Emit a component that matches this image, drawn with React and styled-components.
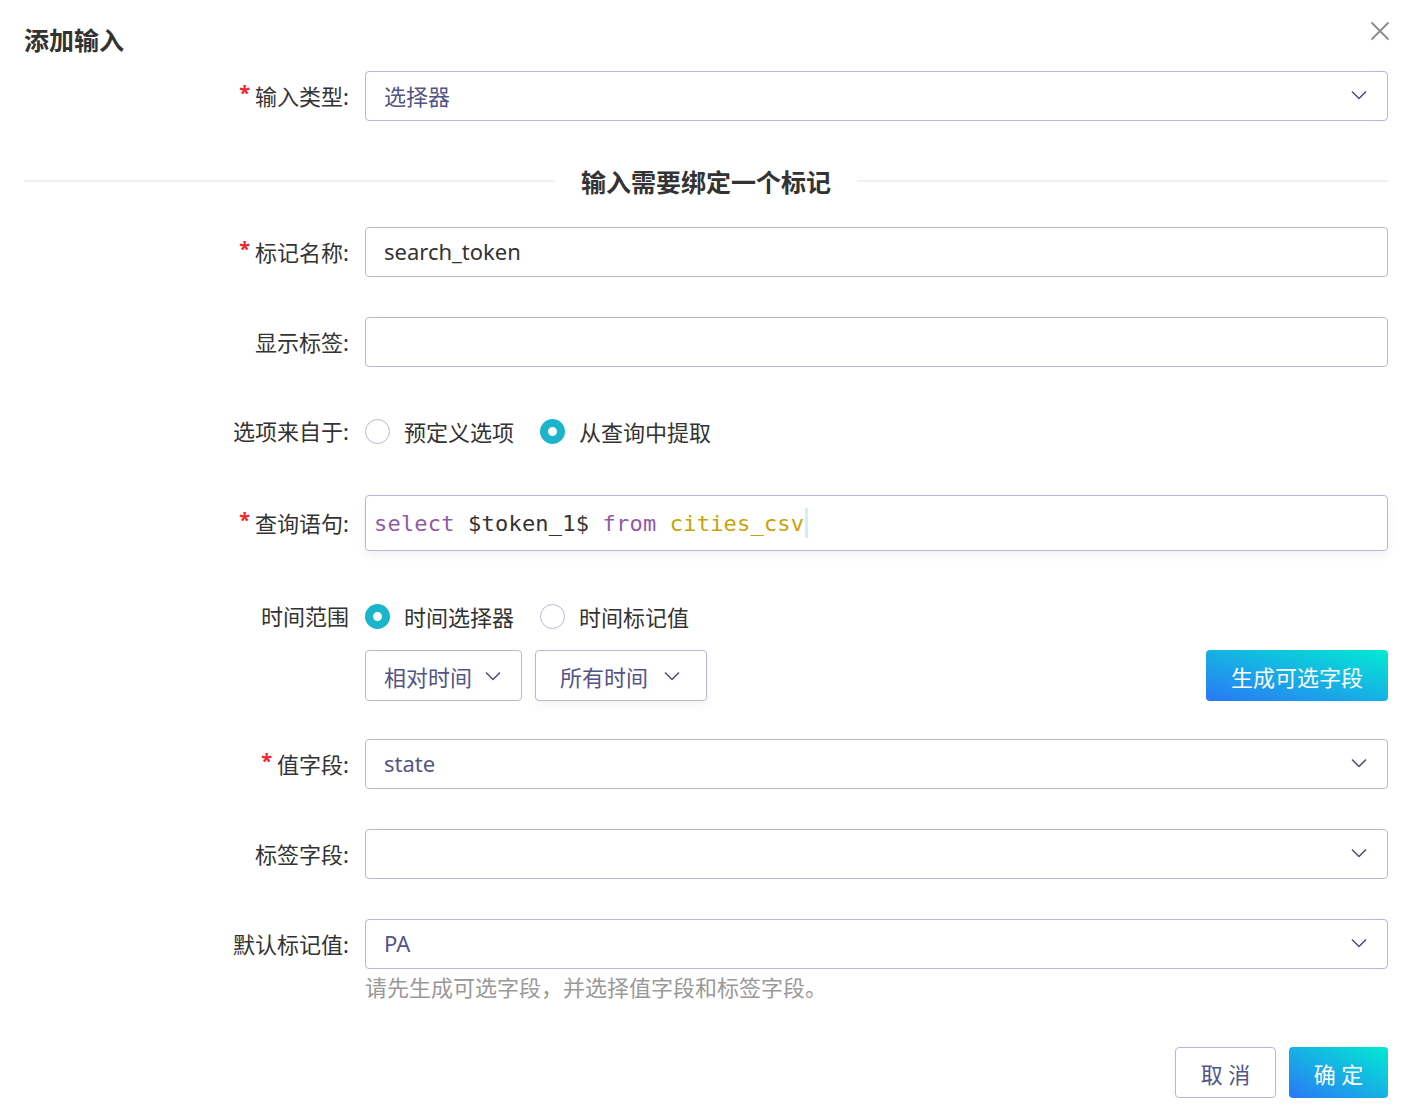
import React from 'react'
import styled, { createGlobalStyle } from 'styled-components'

const GlobalStyle = createGlobalStyle`
  body {
    margin: 0;
    background: #fff;
    font-family: "Noto Sans", "Noto Sans CJK SC", sans-serif;
    color: #333;
  }
`

const Modal = styled.div`
  width: 1408px;
  box-sizing: border-box;
  padding: 0 20px 0 24px;
`

const Header = styled.div`
  display: flex;
  align-items: center;
  justify-content: space-between;
  height: 32px;
  padding-top: 24px;
`

const Title = styled.h2`
  margin: 0;
  font-size: 25px;
  line-height: 32px;
  font-weight: 700;
  color: #333;
`

const CloseBtn = styled.button`
  border: none;
  background: none;
  padding: 0;
  margin-top: -18px;
  margin-right: -4px;
  width: 24px;
  height: 24px;
  display: flex;
  align-items: center;
  justify-content: center;
  cursor: pointer;
`

const Form = styled.div`
  margin-top: 15px;
`

const Item = styled.div`
  display: grid;
  grid-template-columns: 325px 1fr;
  column-gap: 16px;
  margin-bottom: ${p => (p.$mb != null ? p.$mb : 40)}px;
`

const Label = styled.div`
  display: flex;
  justify-content: flex-end;
  align-items: center;
  height: ${p => p.$h || 50}px;
  padding-bottom: 2px;
  box-sizing: border-box;
  font-size: 22px;
  color: #333;
  white-space: nowrap;
`

const Star = styled.span`
  color: #f5222d;
  font-size: 20px;
  font-weight: 700;
  margin-right: 5px;
  position: relative;
  top: -3px;
`

const Control = styled.div`
  min-width: 0;
`

const Box = styled.div`
  box-sizing: border-box;
  height: ${p => p.$h || 50}px;
  border: 1px solid #b9b6dc;
  border-radius: 4px;
  display: flex;
  align-items: center;
  justify-content: space-between;
  padding: 0 20px 2px 18px;
  font-size: 22px;
  color: ${p => (p.$dark ? '#333' : '#545486')};
  background: #fff;
`

const CodeBox = styled.div`
  box-sizing: border-box;
  height: 56px;
  border: 1px solid #b9b6dc;
  border-radius: 4px;
  display: flex;
  align-items: center;
  padding: 0 8px;
  box-shadow: 0 4px 10px rgba(0, 0, 0, 0.06);
`

const CodeLine = styled.span`
  font-family: "DejaVu Sans Mono", "Liberation Mono", monospace;
  font-size: 22px;
  letter-spacing: 0.2px;
  color: #333;
  white-space: pre;
`

const Tok = styled.span`
  color: ${p => (p.$kind === 'kw' ? '#8f5ba8' : p.$kind === 'tbl' ? '#c9a206' : '#333')};
`

const Caret = styled.span`
  display: inline-block;
  width: 3px;
  height: 30px;
  margin-left: 1px;
  background: #d3eff6;
`

const Divider = styled.div`
  display: flex;
  align-items: center;
  gap: 26px;
  margin: 44px 0 30px;
  height: 32px;
  &::before,
  &::after {
    content: '';
    flex: 1;
    height: 2px;
    background: #f0f0f5;
  }
`

const DividerText = styled.span`
  font-size: 25px;
  font-weight: 700;
  color: #333;
`

const RadioGroup = styled.div`
  display: flex;
  align-items: center;
  height: ${p => p.$h || 50}px;
  gap: 26px;
`

const RadioOption = styled.label`
  display: flex;
  align-items: center;
  gap: 14px;
  font-size: 22px;
  color: #333;
  cursor: pointer;
`

const RadioDot = styled.span`
  box-sizing: border-box;
  width: 25px;
  height: 25px;
  border-radius: 50%;
  border: ${p => (p.$on ? '8px solid #1bb5cb' : '1px solid #b9b6dc')};
  background: #fff;
  flex-shrink: 0;
`

const TimeRow = styled.div`
  display: flex;
  align-items: center;
  margin-top: 9px;
  gap: 13px;
`

const Dropdown = styled.button`
  box-sizing: border-box;
  height: 51px;
  border: 1px solid #b9b6dc;
  border-radius: 4px;
  background: #fff;
  display: flex;
  align-items: center;
  gap: ${p => (p.$wide ? 16 : 13)}px;
  padding: ${p => (p.$wide ? '0 26px 0 24px' : '0 20px 0 18px')};
  font-family: inherit;
  font-size: 22px;
  color: #545486;
  box-shadow: ${p => (p.$wide ? '0 3px 8px rgba(0,0,0,0.05)' : 'none')};
`

const GradientBtn = styled.button`
  box-sizing: border-box;
  height: 51px;
  border: none;
  border-radius: 4px;
  background: linear-gradient(to top right, #2a78f6, #03ead3);
  color: #fff;
  font-family: inherit;
  font-size: 22px;
  padding: 0 25px;
  cursor: pointer;
`

const ConfirmBtn = styled(GradientBtn)`
  width: 99px;
  padding: 0;
  text-align: center;
  white-space: pre;
`

const Spacer = styled.div`
  flex: 1;
`

const Help = styled.div`
  margin-top: 3px;
  font-size: 22px;
  line-height: 30px;
  color: #999;
`

const Footer = styled.div`
  display: flex;
  justify-content: flex-end;
  gap: 13px;
  margin-top: 45px;
`

const GhostBtn = styled.button`
  box-sizing: border-box;
  height: 51px;
  width: 101px;
  border: 1px solid #b9b6dc;
  border-radius: 4px;
  background: #fff;
  font-family: inherit;
  font-size: 22px;
  padding: 0;
  text-align: center;
  white-space: pre;
  color: #545486;
  box-shadow: 0 3px 8px rgba(0, 0, 0, 0.05);
`

const Chevron = () => (
  <svg width="16" height="10" viewBox="0 0 16 10" fill="none">
    <path d="M1 1.5 L8 8.5 L15 1.5" stroke="#52527e" strokeWidth="1.6" strokeLinejoin="round" />
  </svg>
)

const CloseIcon = () => (
  <svg width="20" height="20" viewBox="0 0 20 20" fill="none">
    <path d="M1.5 1.5 L18.5 18.5 M18.5 1.5 L1.5 18.5" stroke="#8c8c8c" strokeWidth="1.8" />
  </svg>
)

const FormLabel = ({ required, colon = true, children, h }) => (
  <Label $h={h}>
    {required && <Star>*</Star>}
    {children}
    {colon && ':'}
  </Label>
)

const Select = ({ value }) => (
  <Box>
    <span>{value}</span>
    <Chevron />
  </Box>
)

export default function App() {
  return (
    <Modal>
      <GlobalStyle />
      <Header>
        <Title>添加输入</Title>
        <CloseBtn><CloseIcon /></CloseBtn>
      </Header>
      <Form>
        <Item>
          <FormLabel required>输入类型</FormLabel>
          <Control><Select value="选择器" /></Control>
        </Item>

        <Divider><DividerText>输入需要绑定一个标记</DividerText></Divider>

        <Item>
          <FormLabel required>标记名称</FormLabel>
          <Control><Box $dark>search_token</Box></Control>
        </Item>

        <Item>
          <FormLabel>显示标签</FormLabel>
          <Control><Box /></Control>
        </Item>

        <Item>
          <FormLabel h={48}>选项来自于</FormLabel>
          <Control>
            <RadioGroup $h={48}>
              <RadioOption><RadioDot />预定义选项</RadioOption>
              <RadioOption><RadioDot $on />从查询中提取</RadioOption>
            </RadioGroup>
          </Control>
        </Item>

        <Item>
          <FormLabel required h={56}>查询语句</FormLabel>
          <Control>
            <CodeBox>
              <CodeLine>
                <Tok $kind="kw">select</Tok>
                {' $token_1$ '}
                <Tok $kind="kw">from</Tok>
                {' '}
                <Tok $kind="tbl">cities_csv</Tok>
              </CodeLine>
              <Caret />
            </CodeBox>
          </Control>
        </Item>

        <Item $mb={38}>
          <FormLabel colon={false}>时间范围</FormLabel>
          <Control>
            <RadioGroup>
              <RadioOption><RadioDot $on />时间选择器</RadioOption>
              <RadioOption><RadioDot />时间标记值</RadioOption>
            </RadioGroup>
            <TimeRow>
              <Dropdown>相对时间<Chevron /></Dropdown>
              <Dropdown $wide>所有时间<Chevron /></Dropdown>
              <Spacer />
              <GradientBtn>生成可选字段</GradientBtn>
            </TimeRow>
          </Control>
        </Item>

        <Item>
          <FormLabel required>值字段</FormLabel>
          <Control><Select value="state" /></Control>
        </Item>

        <Item>
          <FormLabel>标签字段</FormLabel>
          <Control><Select value="" /></Control>
        </Item>

        <Item $mb={0}>
          <FormLabel>默认标记值</FormLabel>
          <Control>
            <Select value="PA" />
            <Help>请先生成可选字段，并选择值字段和标签字段。</Help>
          </Control>
        </Item>
      </Form>
      <Footer>
        <GhostBtn>取 消</GhostBtn>
        <ConfirmBtn>确 定</ConfirmBtn>
      </Footer>
    </Modal>
  )
}
